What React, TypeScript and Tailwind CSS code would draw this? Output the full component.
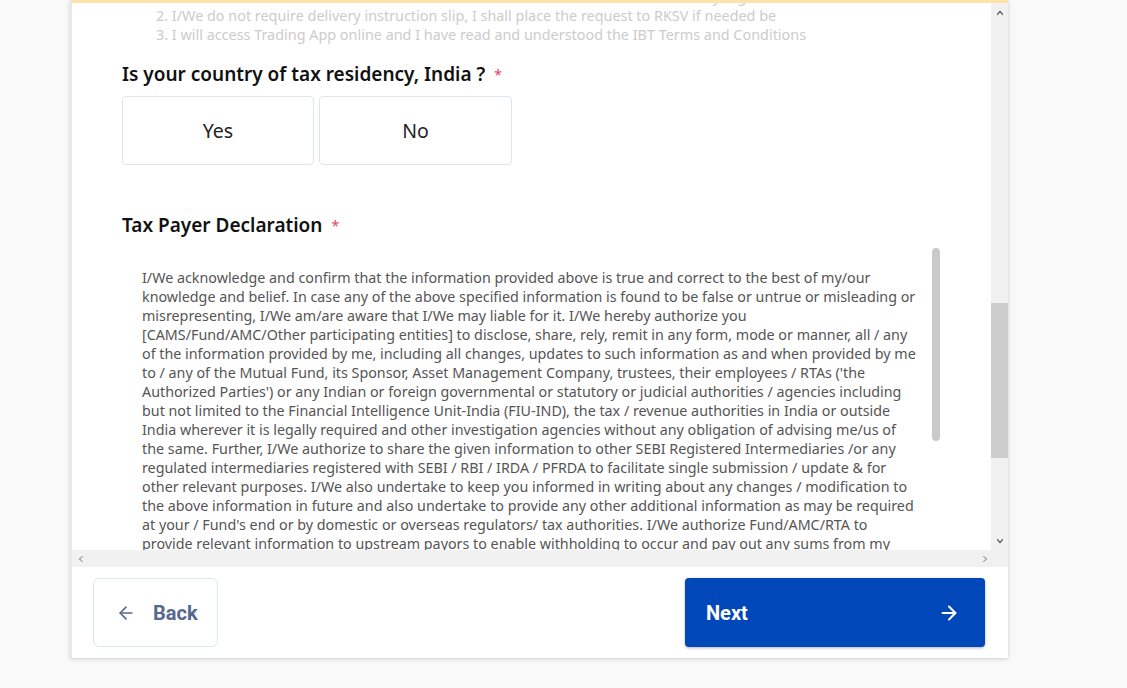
import { ArrowLeft, ArrowRight } from "lucide-react";

const listLines = [
  "1. I/We would like to receive the Demat Account statement in electronic form on my registered email ID",
  "2. I/We do not require delivery instruction slip, I shall place the request to RKSV if needed be",
  "3. I will access Trading App online and I have read and understood the IBT Terms and Conditions",
];

const declaration = [
  "I/We acknowledge and confirm that the information provided above is true and correct to the best of my/our",
  "knowledge and belief. In case any of the above specified information is found to be false or untrue or misleading or",
  "misrepresenting, I/We am/are aware that I/We may liable for it. I/We hereby authorize you",
  "[CAMS/Fund/AMC/Other participating entities] to disclose, share, rely, remit in any form, mode or manner, all / any",
  "of the information provided by me, including all changes, updates to such information as and when provided by me",
  "to / any of the Mutual Fund, its Sponsor, Asset Management Company, trustees, their employees / RTAs ('the",
  "Authorized Parties') or any Indian or foreign governmental or statutory or judicial authorities / agencies including",
  "but not limited to the Financial Intelligence Unit-India (FIU-IND), the tax / revenue authorities in India or outside",
  "India wherever it is legally required and other investigation agencies without any obligation of advising me/us of",
  "the same. Further, I/We authorize to share the given information to other SEBI Registered Intermediaries /or any",
  "regulated intermediaries registered with SEBI / RBI / IRDA / PFRDA to facilitate single submission / update & for",
  "other relevant purposes. I/We also undertake to keep you informed in writing about any changes / modification to",
  "the above information in future and also undertake to provide any other additional information as may be required",
  "at your / Fund's end or by domestic or overseas regulators/ tax authorities. I/We authorize Fund/AMC/RTA to",
  "provide relevant information to upstream payors to enable withholding to occur and pay out any sums from my",
  "account or close or suspend my account(s) under intimation to me/us.",
];

// chrome-style scrollbar arrow
const Chevron = ({ dir }: { dir: "up" | "down" | "left" | "right" }) => {
  const pts = {
    up: "1,6 4,2.5 7,6 7,7.5 4,4.5 1,7.5",
    down: "1,2 4,5.5 7,2 7,0.5 4,3.5 1,0.5",
    left: "6,1 2.5,4 6,7 7.5,7 4.5,4 7.5,1",
    right: "2,1 5.5,4 2,7 0.5,7 3.5,4 0.5,1",
  }[dir];
  return (
    <svg width="8" height="8" viewBox="0 0 8 8">
      <polygon points={pts} fill={dir === "left" || dir === "right" ? "#a3a3a3" : "#505050"} />
    </svg>
  );
};

export default function App() {
  return (
    <div className="w-full h-[688px] bg-[#f9f9f9] flex" style={{ fontFamily: "'Noto Sans', sans-serif" }}>
      <div className="ml-[70px] w-[938px] h-[658px] bg-white border-l-2 border-[#e8e8e8] shadow-[0_1px_4px_rgba(0,0,0,0.18)] flex flex-col">
        <div className="h-[3px] bg-[#fde2a9]" />

        <div className="h-[547px] flex">
          {/* scrolled form content */}
          <div className="flex-1 overflow-hidden pl-[50px]">
            <div className="-mt-[16px] pl-[34px] text-[14.4px] leading-[19px] text-[#cccccc]">
              {listLines.map((l) => (
                <div key={l} className="whitespace-nowrap">{l}</div>
              ))}
            </div>

            <div className="mt-[18px] flex items-start h-[24px]">
              <h2 className="text-[19px] leading-[24px] font-semibold text-[#111]">
                Is your country of tax residency, India ?
              </h2>
              <span className="ml-[9px] mt-[2px] text-[14px] text-[#e8455f]">*</span>
            </div>

            <div className="mt-[10px] flex gap-[5px]">
              <button className="w-[192px] h-[69px] border border-[#dfe5ee] rounded-[4px] text-[19.5px] text-[#222]">
                Yes
              </button>
              <button className="w-[193px] h-[69px] border border-[#dfe5ee] rounded-[4px] text-[19.5px] text-[#222]">
                No
              </button>
            </div>

            <div className="mt-[48px] flex items-start h-[24px]">
              <h2 className="text-[19px] leading-[24px] font-semibold text-[#111]">Tax Payer Declaration</h2>
              <span className="ml-[9px] mt-[2px] text-[14px] text-[#e8455f]">*</span>
            </div>

            <div className="mt-[11px] w-[818px] h-[330px] flex">
              <div className="flex-1 overflow-hidden pl-[20px] pt-[20px] text-[14.3px] leading-[19px] text-[#555]">
                {declaration.map((l) => (
                  <div key={l} className="whitespace-nowrap">{l}</div>
                ))}
              </div>
              <div className="w-[8px] flex flex-col">
                <div className="h-[193px] rounded-full bg-[#c9c9c9]" />
              </div>
            </div>
          </div>

          {/* vertical scrollbar */}
          <div className="w-[17px] bg-[#f1f1f1] flex flex-col">
            <div className="h-[17px] flex items-center justify-center"><Chevron dir="up" /></div>
            <div className="h-[283px]" />
            <div className="h-[155px] bg-[#cdcdcd]" />
            <div className="flex-1" />
            <div className="h-[17px] flex items-center justify-center"><Chevron dir="down" /></div>
          </div>
        </div>

        {/* horizontal scrollbar */}
        <div className="h-[17px] bg-[#f1f1f1] flex items-center justify-between pl-[4px] pr-[18px]">
          <Chevron dir="left" />
          <Chevron dir="right" />
        </div>

        {/* footer */}
        <div className="flex-1 flex items-start justify-between pt-[11px] pl-[21px] pr-[23px]" style={{ fontFamily: "Roboto, sans-serif" }}>
          <button className="w-[125px] h-[69px] border border-[#dce6f4] rounded-[6px] bg-white flex items-center pl-[22px] gap-[17px] text-[#56688c]">
            <ArrowLeft size={20} strokeWidth={2} />
            <span className="text-[20px] font-bold">Back</span>
          </button>
          <button className="w-[300px] h-[69px] rounded-[4px] bg-[#0047ba] shadow-[0_1px_3px_rgba(0,0,0,0.3)] flex items-center justify-between pl-[21px] pr-[25px] text-white">
            <span className="text-[20px] font-bold">Next</span>
            <ArrowRight size={22} strokeWidth={2.2} />
          </button>
        </div>
      </div>
    </div>
  );
}
